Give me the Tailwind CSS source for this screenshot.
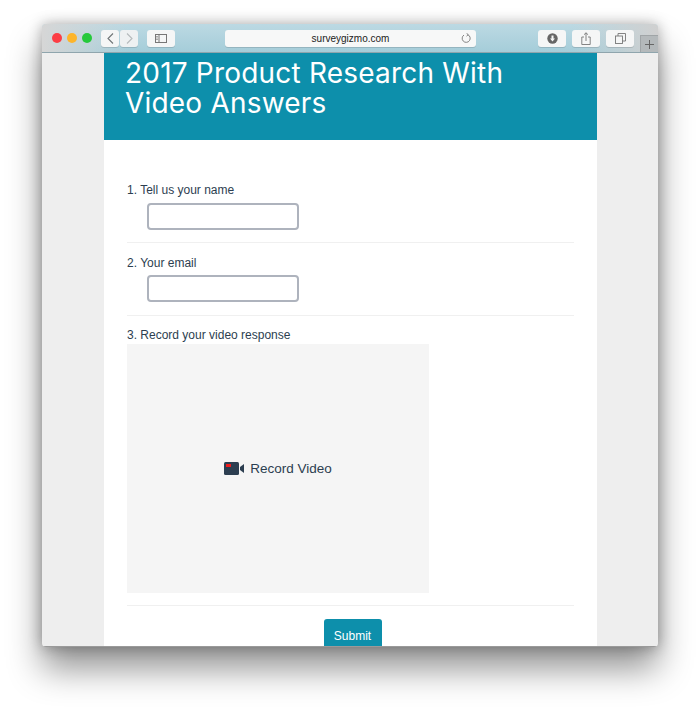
<!DOCTYPE html>
<html lang="en">
<head>
    <meta charset="UTF-8">
    <meta name="viewport" content="width=device-width, initial-scale=1.0">
    <title>2017 Product Research With Video Answers</title>
    <script src="https://cdn.jsdelivr.net/npm/@tailwindcss/browser@4"></script>
</head>
<body class="bg-white font-['Liberation_Sans',Arial,sans-serif] overflow-hidden">

<div class="w-[700px] h-[708px] pt-[24px] pl-[42px]">
    <!-- Safari window -->
    <div class="w-[616px] h-[623px] rounded-[4px] overflow-hidden flex flex-col bg-[#eeeeee] shadow-[0_0_14px_rgba(0,0,0,0.3),0_22px_34px_rgba(0,0,0,0.42)]">

        <!-- Toolbar -->
        <div class="h-[29px] shrink-0 relative flex items-center pl-[10px] bg-[linear-gradient(90deg,#d6d6d6_0%,rgba(214,214,214,0)_14%,rgba(214,214,214,0)_86%,#d0d0d0_100%),linear-gradient(180deg,#bcd9e3,#a5cdd9)] border-b border-[#8fa5ad]">
            <div class="flex gap-[5px]">
                <span class="w-[10px] h-[10px] rounded-full bg-[#fc3d44]"></span>
                <span class="w-[10px] h-[10px] rounded-full bg-[#fdb52a]"></span>
                <span class="w-[10px] h-[10px] rounded-full bg-[#25c93b]"></span>
            </div>
            <div class="flex gap-[1px] ml-[9px]">
                <div class="w-[18px] h-[17px] rounded-[3px] bg-[#f5f6f6] shadow-[0_1px_0_rgba(0,0,0,0.12)] flex items-center justify-center">
                    <svg width="7" height="11" viewBox="0 0 7 11" fill="none" stroke="#6f7476" stroke-width="1.1"><path d="M6 .5 1 5.500l5 5"/></svg>
                </div>
                <div class="w-[18px] h-[17px] rounded-[3px] bg-[#eef1f2] shadow-[0_1px_0_rgba(0,0,0,0.12)] flex items-center justify-center">
                    <svg width="7" height="11" viewBox="0 0 7 11" fill="none" stroke="#b5babc" stroke-width="1.1"><path d="m1 .5 5 5-5 5"/></svg>
                </div>
            </div>
            <div class="w-[28px] h-[17px] rounded-[3px] bg-[#f5f6f6] shadow-[0_1px_0_rgba(0,0,0,0.12)] ml-[9px] flex items-center justify-center">
                <svg width="12" height="9" viewBox="0 0 12 9" fill="none" stroke="#777" stroke-width="1"><rect x=".5" y=".5" width="11" height="8"/><path d="M4 .5v8"/><path d="M1 2.500h2M1 4h2M1 5.500h2" stroke-width=".6"/></svg>
            </div>
            <div class="w-[251px] h-[17px] rounded-[3px] bg-[#f7f8f8] shadow-[0_1px_0_rgba(0,0,0,0.12)] ml-[50px] relative flex items-center justify-center">
                <span class="text-[10px] text-[#222]">surveygizmo.com</span>
                <svg class="absolute right-[4px] top-[3px]" width="11" height="11" viewBox="0 0 11 11" fill="none" stroke="#777" stroke-width=".9"><path d="M6.800 1.700A4 4 0 1 1 3 2"/><path d="M5.500 .2 7.200 1.700 5.500 3.200" /></svg>
            </div>
            <div class="w-[28px] h-[17px] rounded-[3px] bg-[#f5f6f6] shadow-[0_1px_0_rgba(0,0,0,0.12)] ml-[62px] flex items-center justify-center">
                <svg width="11" height="11" viewBox="0 0 11 11"><circle cx="5.500" cy="5.500" r="5.200" fill="#666"/><path d="M4.500 2.500h2v3h1.500L5.500 8.500 3 5.500h1.500z" fill="#f5f6f6"/></svg>
            </div>
            <div class="w-[28px] h-[17px] rounded-[3px] bg-[#f5f6f6] shadow-[0_1px_0_rgba(0,0,0,0.12)] ml-[6px] flex items-center justify-center">
                <svg width="10" height="13" viewBox="0 0 10 13" fill="none" stroke="#777" stroke-width=".9"><path d="M3 5H.8v7.500h8.400V5H7"/><path d="M5 9V.8M3 2.700 5 .8l2 1.900"/></svg>
            </div>
            <div class="w-[28px] h-[17px] rounded-[3px] bg-[#f5f6f6] shadow-[0_1px_0_rgba(0,0,0,0.12)] ml-[6px] flex items-center justify-center">
                <svg width="11" height="11" viewBox="0 0 11 11" fill="none" stroke="#777" stroke-width=".9"><rect x=".5" y="3" width="7" height="7.500" fill="#f5f6f6"/><path d="M3 3V.5h7.500V8H7.500"/></svg>
            </div>
            <!-- new tab button -->
            <div class="absolute right-0 bottom-0 w-[18px] h-[17px] bg-[#b4b9bb] border-l border-t border-[#a0a5a7] flex items-center justify-center">
                <svg width="9" height="9" viewBox="0 0 9 9" stroke="#666" stroke-width="1"><path d="M4.500 0v9M0 4.500h9"/></svg>
            </div>
        </div>

        <!-- Page -->
        <div class="w-[493px] ml-[62px] bg-white flex-1 overflow-hidden">
            <div class="h-[87px] bg-[#0d8fab] pl-[21px] pt-[5px]">
                <h1 class="text-white text-[28px] leading-[30px] font-['Inter',sans-serif] font-normal tracking-[0.2px]">2017 Product Research With<br>Video Answers</h1>
            </div>

            <div class="pt-[42px] mx-[23px] text-[12px] leading-[16px] text-[#2c3e50]">
                <div class="pb-[12px] border-b border-[#f0f0f0]">
                    <p>1. Tell us your name</p>
                    <input type="text" class="block w-[152px] h-[27px] mt-[5px] ml-[20px] rounded-[4px] border-2 border-[#aeb3bd] bg-white">
                </div>
                <div class="pt-[12px] pb-[13px] border-b border-[#f0f0f0]">
                    <p>2. Your email</p>
                    <input type="text" class="block w-[152px] h-[27px] mt-[4px] ml-[20px] rounded-[4px] border-2 border-[#aeb3bd] bg-white">
                </div>
                <div class="pt-[11px] pb-[12px] border-b border-[#f0f0f0]">
                    <p class="mb-px">3. Record your video response</p>
                    <div class="w-[302px] h-[249px] bg-[#f5f5f5] flex items-center justify-center gap-[6px]">
                        <svg width="20" height="13" viewBox="0 0 20 13">
                            <rect x="0" y="0" width="15" height="13" rx="1.500" fill="#2c3e50"/>
                            <rect x="2" y="2" width="5" height="3" fill="#f01c1c"/>
                            <path d="M16 5 20 2v9l-4-3z" fill="#2c3e50"/>
                        </svg>
                        <span class="text-[13.500px] text-[#2c3e50]">Record Video</span>
                    </div>
                </div>
                <div class="flex justify-center pt-[13px] pl-[4px]">
                    <button class="w-[58px] h-[34px] rounded-[3px] bg-[#0d8fab] text-white text-[12px] font-normal">Submit</button>
                </div>
            </div>
        </div>
        <div class="h-px shrink-0 bg-[#9a9a9a]"></div>
    </div>
</div>

</body>
</html>
